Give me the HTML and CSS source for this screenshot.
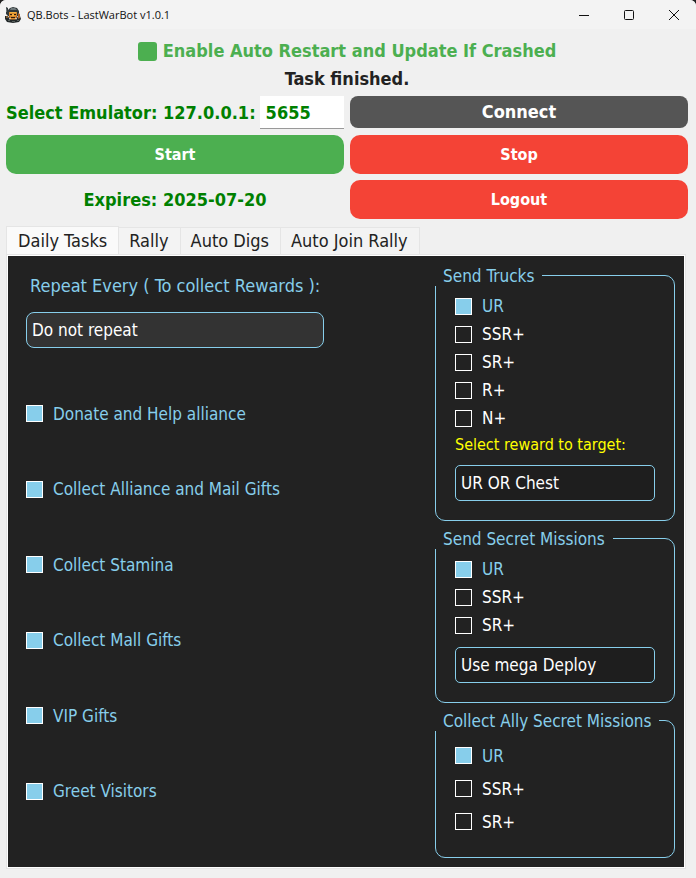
FILE: index.html
```html
<!DOCTYPE html>
<html lang="en">
<head>
<meta charset="utf-8">
<title>QB.Bots - LastWarBot v1.0.1</title>
<link rel="stylesheet" href="styles.css">
</head>
<body>
<div class="window">
  <header class="titlebar">
    <svg class="app-icon" viewBox="0 0 16 16" aria-hidden="true">
      <path fill="#30383a" d="M1 0l2 1v2l2-2 3-1 4 1 2 3v4l-1 1H3L1 7z"/>
      <path fill="#6c7678" d="M6 1h4l2 2H5zM1 1l1 1v3H1z"/>
      <path fill="#23292a" d="M0 9h3l2 4h6l2-4h2l1 3-2 3-6 1-6-1-2-3z"/>
      <path fill="#d98a2c" d="M4 5h8v5l-2 2H6l-2-2z"/>
      <path fill="#f3b03f" d="M5 5h6v1H5zM7 7h2v2H7z"/>
      <path fill="#2f1e10" d="M5 7h2v1H5zM9 7h2v1H9zM6 10h4v1H6z"/>
      <path fill="#a8622a" d="M13 6l2 1v4l-2 1zM4 9h1v2H4zM11 9h1v2h-1z"/>
      <path fill="#7d5a32" d="M1 9h2v2H1zM5 12h6v1H5z"/>
      <path fill="#59625f" d="M3 13h2v1H3zM7 14h3v1H7zM12 13h2v1h-2z"/>
    </svg>
    <h1 class="title">QB.Bots - LastWarBot v1.0.1</h1>
    <button class="caption" type="button" aria-label="Minimize"><svg viewBox="0 0 12 12"><path d="M1 6.5h10"/></svg></button>
    <button class="caption" type="button" aria-label="Maximize"><svg viewBox="0 0 12 12"><rect x="1.5" y="1.5" width="9" height="9" rx="1"/></svg></button>
    <button class="caption" type="button" aria-label="Close"><svg viewBox="0 0 12 12"><path d="M1 1l10 10M11 1L1 11"/></svg></button>
  </header>

  <section class="controls">
    <label class="restart"><input type="checkbox" checked>Enable Auto Restart and Update If Crashed</label>
    <p class="status">Task finished.</p>
    <div class="emulator">
      <label for="port">Select Emulator: 127.0.0.1:</label>
      <input id="port" type="text" value="5655">
    </div>
    <button class="action connect" type="button">Connect</button>
    <button class="action start" type="button">Start</button>
    <button class="action stop" type="button">Stop</button>
    <p class="expires">Expires: 2025-07-20</p>
    <button class="action stop" type="button">Logout</button>
  </section>

  <nav class="tabs" role="tablist">
    <button class="tab active" type="button" role="tab" aria-selected="true">Daily Tasks</button>
    <button class="tab" type="button" role="tab">Rally</button>
    <button class="tab" type="button" role="tab">Auto Digs</button>
    <button class="tab" type="button" role="tab">Auto Join Rally</button>
  </nav>

  <main class="frame">
    <div class="panel">
      <div class="daily">
        <label class="repeat-label" for="repeat">Repeat Every ( To collect Rewards ):</label>
        <select id="repeat" class="combo repeat"><option>Do not repeat</option></select>
        <div class="tasks">
          <label class="check"><input type="checkbox" checked><span>Donate and Help alliance</span></label>
          <label class="check"><input type="checkbox" checked><span>Collect Alliance and Mail Gifts</span></label>
          <label class="check"><input type="checkbox" checked><span>Collect Stamina</span></label>
          <label class="check"><input type="checkbox" checked><span>Collect Mall Gifts</span></label>
          <label class="check"><input type="checkbox" checked><span>VIP Gifts</span></label>
          <label class="check"><input type="checkbox" checked><span>Greet Visitors</span></label>
        </div>
      </div>
      <div class="groups">
        <fieldset class="group">
          <legend>Send Trucks</legend>
          <label class="check"><input type="checkbox" checked><span>UR</span></label>
          <label class="check"><input type="checkbox"><span>SSR+</span></label>
          <label class="check"><input type="checkbox"><span>SR+</span></label>
          <label class="check"><input type="checkbox"><span>R+</span></label>
          <label class="check"><input type="checkbox"><span>N+</span></label>
          <label class="reward-label" for="reward">Select reward to target:</label>
          <select id="reward" class="combo"><option>UR OR Chest</option></select>
        </fieldset>
        <fieldset class="group">
          <legend>Send Secret Missions</legend>
          <label class="check"><input type="checkbox" checked><span>UR</span></label>
          <label class="check"><input type="checkbox"><span>SSR+</span></label>
          <label class="check"><input type="checkbox"><span>SR+</span></label>
          <select class="combo" aria-label="Deploy mode"><option>Use mega Deploy</option></select>
        </fieldset>
        <fieldset class="group roomy">
          <legend>Collect Ally Secret Missions</legend>
          <label class="check"><input type="checkbox" checked><span>UR</span></label>
          <label class="check"><input type="checkbox"><span>SSR+</span></label>
          <label class="check"><input type="checkbox"><span>SR+</span></label>
        </fieldset>
      </div>
    </div>
  </main>
</div>
</body>
</html>
```

FILE: styles.css
```css
* { box-sizing: border-box; }

html { background: #222; }

body {
  margin: 0;
  font-family: "DejaVu Sans Condensed", "DejaVu Sans", sans-serif;
  font-size: 17px;
  line-height: 22px;
  color: #222;
}

button, input, select { font: inherit; color: inherit; margin: 0; }
p { margin: 0; }

.window {
  display: flex;
  flex-direction: column;
  min-height: 100vh;
  padding-bottom: 9px;
  background: #f0f0f0;
  border-radius: 6px 6px 0 0;
}

/* Title bar */
.titlebar {
  display: flex;
  align-items: center;
  height: 29px;
  padding-left: 5px;
  background: #f3f3f3;
  border-radius: 6px 6px 0 0;
}
.app-icon { width: 16px; height: 16px; margin-right: 6px; }
.title {
  flex: 1;
  margin: 0;
  font-family: "Open Sans", "Noto Sans", sans-serif;
  font-size: 11px;
  font-weight: 400;
  color: #111;
}
.caption {
  display: grid;
  place-items: center;
  width: 45px;
  height: 29px;
  padding: 0;
  border: 0;
  background: none;
}
.caption svg { width: 12px; height: 12px; fill: none; stroke: #111; }

/* Connection controls */
.controls {
  display: grid;
  grid-template-columns: repeat(2, minmax(0, 1fr));
  gap: 6px;
  padding: 11px 8px 0 6px;
  font-size: 18px;
  font-weight: 700;
}
.restart, .status { grid-column: 1 / -1; justify-self: center; }
.restart { display: flex; align-items: center; gap: 6px; color: #4caf50; }
.restart input {
  appearance: none;
  width: 19px;
  height: 19px;
  border-radius: 3px;
  background: #4caf50;
}
.emulator {
  display: flex;
  align-items: center;
  gap: 4px;
  color: #008000;
}
.emulator label { white-space: nowrap; }
.emulator input {
  flex: 1;
  min-width: 0;
  height: 33px;
  padding: 0 6px;
  border: 0;
  border-bottom: 1px solid #999;
  background: #fff;
}
.expires { align-self: center; text-align: center; color: #008000; }
.action {
  height: 39px;
  padding: 0;
  border: 0;
  border-radius: 10px;
  color: #fff;
  font-size: 16px;
}
.connect { height: 32px; border-radius: 8px; background: #555; font-size: 18px; }
.start { background: #4caf50; }
.stop { background: #f44336; }

/* Tabs */
.tabs { display: flex; align-items: flex-end; padding: 7px 10px 0 6px; font-size: 18px; }
.tab {
  height: 27px;
  padding: 0 11px 0 10px;
  border: 1px solid #e5e5e5;
  border-width: 1px 1px 0 0;
  background: #f3f3f3;
}
.tab.active { height: 28px; padding: 0 11px; border-left-width: 1px; background: #fafafa; }

/* Tab page */
.frame {
  display: flex;
  flex: 1;
  margin: 0 10px 0 6px;
  padding: 1px;
  border: 1px solid #e5e5e5;
  background: #fff;
}
.panel {
  display: grid;
  grid-template-columns: 1fr 240px;
  flex: 1;
  padding: 8px 9px 9px 18px;
  background: #222;
}
.daily {
  display: flex;
  flex-direction: column;
  align-items: flex-start;
  padding: 11px 0 29px;
}
.repeat-label { padding: 0 4px; font-size: 18px; color: #87ceeb; }
.tasks { display: grid; flex: 1; margin-top: 28px; }

.combo {
  appearance: none;
  width: 200px;
  height: 36px;
  padding: 0 5px;
  border: 1px solid #87ceeb;
  border-radius: 5px;
  background: #1e1e1e;
  color: #fff;
}
.repeat { width: 298px; margin-top: 15px; border-radius: 8px; background: #333; }

.check { display: flex; align-items: center; gap: 10px; color: #fff; }
.check input {
  appearance: none;
  width: 17px;
  height: 17px;
  border: 1px solid #fff;
}
.check input:checked { background: #87ceeb; }
.check input:checked + span { color: #87ceeb; }

/* Option groups */
.groups { display: flex; flex-direction: column; gap: 6px; }
.group {
  min-width: 0;
  margin: 0;
  padding: 6px 19px 19px;
  border: 1px solid #87ceeb;
  border-radius: 10px;
}
.group legend {
  height: 22px;
  margin-left: -20px;
  padding: 0 8px;
  line-height: 24px;
  color: #87ceeb;
  white-space: nowrap;
}
.group .check { height: 28px; }
.group .combo { display: block; margin-top: 8px; }
.group.roomy { flex: 1; padding-top: 8px; }
.roomy .check { height: 33px; }
.reward-label { display: block; line-height: 25px; font-size: 16px; color: #ffff00; }
```
